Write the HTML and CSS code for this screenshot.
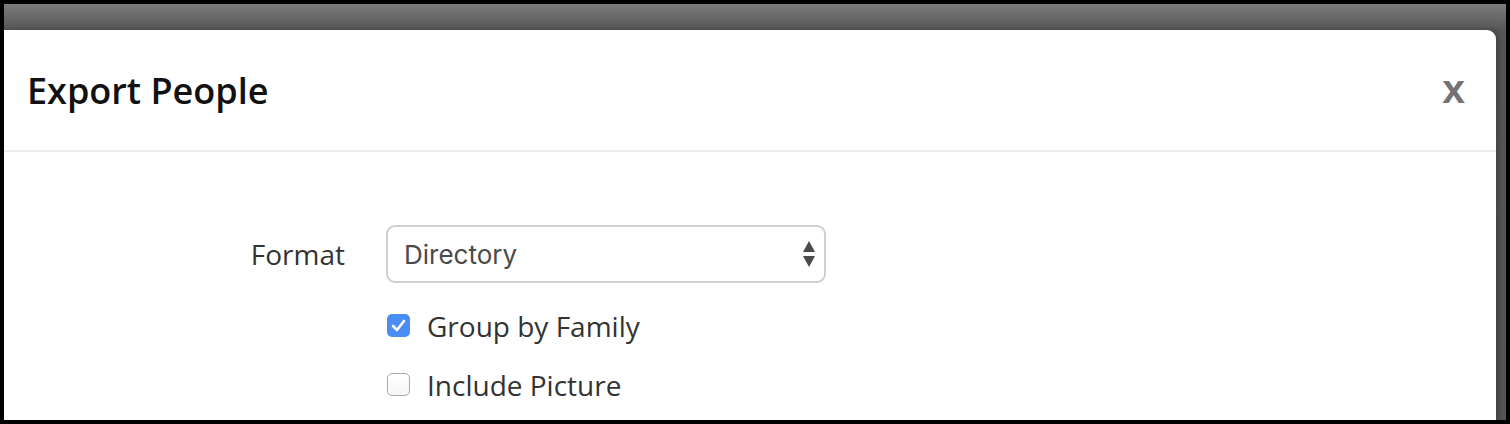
FILE: index.html
```html
<!DOCTYPE html>
<html lang="en">
<head>
<meta charset="utf-8">
<title>Export People</title>
<link rel="stylesheet" href="styles.css">
</head>
<body>
<div class="screen">
  <div class="modal">
    <div class="modal-header">
      <h1 class="modal-title">Export People</h1>
      <span class="close">x</span>
    </div>
    <div class="modal-body">
      <div class="form-row">
        <label class="form-label" for="fmt">Format</label>
        <div class="select-wrap">
          <select id="fmt" class="select">
            <option>Directory</option>
          </select>
          <svg class="select-arrows" width="14" height="28" viewBox="0 0 14 28">
            <path d="M7 0 L13 11 L1 11 Z" fill="#4a4a4a"/>
            <path d="M1 15 L13 15 L7 26 Z" fill="#4a4a4a"/>
          </svg>
        </div>
      </div>
      <div class="check-row">
        <span class="checkbox checked">
          <svg width="15" height="13" viewBox="0 0 15 13"><path d="M2 7 L6 11 L13 2" fill="none" stroke="#fff" stroke-width="2.6" stroke-linecap="round" stroke-linejoin="round"/></svg>
        </span>
        <span class="check-label">Group by Family</span>
      </div>
      <div class="check-row">
        <span class="checkbox"></span>
        <span class="check-label">Include Picture</span>
      </div>
    </div>
  </div>
</div>
</body>
</html>
```
FILE: styles.css
```css
html, body {
  margin: 0;
  padding: 0;
  background: #000;
}
.screen {
  width: 1510px;
  height: 424px;
  box-sizing: border-box;
  border: 4px solid #000;
  background: linear-gradient(to bottom, #7c7c7c 0px, #575757 26px, #555 100%);
  padding: 26px 10px 0 0;
  overflow: hidden;
}
.modal {
  background: #fff;
  border-radius: 0 9px 0 0;
  height: 520px;
  box-shadow: 3px 0 6px rgba(0,0,0,0.25);
}
.modal-header {
  display: flex;
  justify-content: space-between;
  align-items: flex-start;
  padding: 36px 31px 0 23px;
  height: 84px;
  border-bottom: 2px solid #ececec;
}
.modal-title {
  margin: 0;
  font-family: "Open Sans", sans-serif;
  font-weight: 600;
  font-size: 36px;
  line-height: 49px;
  color: #111;
}
.close {
  font-family: "Liberation Sans", Arial, sans-serif;
  font-weight: 700;
  font-size: 41px;
  line-height: 46px;
  color: #737373;
  margin-top: 0;
}
.modal-body {
  padding: 73px 0 0 0;
}
.form-row {
  display: flex;
  align-items: center;
  gap: 41px;
}
.form-label {
  width: 341px;
  text-align: right;
  font-family: "Open Sans", sans-serif;
  font-size: 28px;
  color: #333;
  line-height: 38px;
}
.select-wrap {
  position: relative;
  width: 440px;
  height: 58px;
}
.select {
  appearance: none;
  -webkit-appearance: none;
  width: 100%;
  height: 100%;
  box-sizing: border-box;
  border: 2px solid #cfcfcf;
  border-radius: 9px;
  background: #fff;
  font-family: Inter, "Liberation Sans", sans-serif;
  font-size: 26px;
  color: #4a4a4a;
  padding: 0 0 0 16px;
  margin: 0;
  outline: none;
}
.select-arrows {
  position: absolute;
  right: 10px;
  top: 16px;
  pointer-events: none;
}
.check-row {
  display: flex;
  align-items: center;
  gap: 17px;
  margin-left: 383px;
  height: 59px;
}
.form-row + .check-row {
  margin-top: 13px;
}
.checkbox {
  width: 23px;
  height: 23px;
  box-sizing: border-box;
  border: 1.5px solid #a8a8a8;
  border-radius: 5px;
  background: linear-gradient(#fff, #f6f6f6);
  display: flex;
  align-items: center;
  justify-content: center;
}
.checkbox.checked {
  border: none;
  background: #4a8ef5;
}
.check-label {
  font-family: "Open Sans", sans-serif;
  font-size: 28px;
  color: #333;
  line-height: 38px;
}
```
